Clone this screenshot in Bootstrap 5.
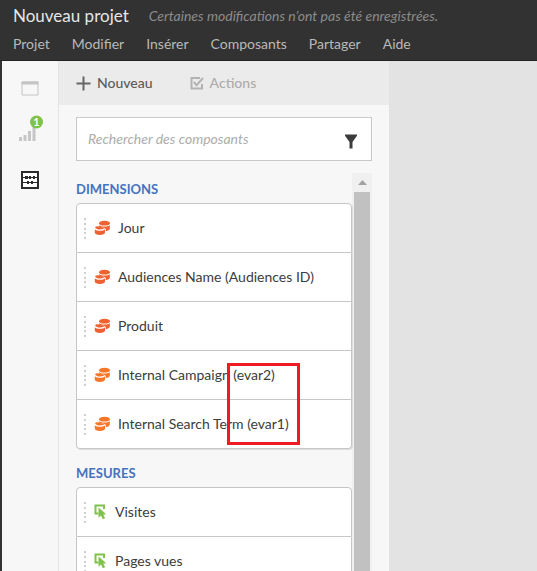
<!DOCTYPE html>
<html lang="fr">
<head>
<meta charset="utf-8">
<meta name="viewport" content="width=device-width, initial-scale=1">
<title>Nouveau projet</title>
<link href="https://cdn.jsdelivr.net/npm/bootstrap@5.3.0/dist/css/bootstrap.min.css" rel="stylesheet">
<style>
  body { font-family: Lato, "Open Sans", sans-serif; font-size: 14px; line-height: 20px; color: #3c3c3c; background: #e3e3e3; }
  svg { display: block; flex: none; }
  button { font-size: 14px; line-height: 20px; }
  .topbar { background: #323232; border-bottom: 1px solid #232323; height: 61px; padding: 6px 13px 0; }
  .topbar-row { gap: 20px; }
  .project-title { font-size: 17px; line-height: 20px; color: #e6e6e6; }
  .save-note { color: #8c8c8c; }
  .menu-list { gap: 22px; margin-top: 8px; }
  .menu-list a { color: #b9b9b9; }
  .workspace { border-left: 2px solid #323232; }
  .rail { width: 57px; background: #f7f7f7; border-right: 1px solid #e4e4e4; padding-top: 19px; gap: 17px; }
  .side-panel { width: 330px; background: #f7f7f7; }
  .toolbar { background: #ebebeb; height: 44px; padding: 0 17px; gap: 37px; }
  .toolbar button { gap: 6px; font-weight: 500; color: #5c5c5c; }
  .toolbar button:disabled { color: #acacac; }
  .search-box { margin: 12px 17px; height: 44px; border: 1px solid #c8c8c8; background: #fff; padding: 0 10px 0 11px; }
  .search-box input { outline: 0; font-style: italic; color: #444; }
  .search-box input::placeholder { color: #acacac; opacity: 1; }
  .component-area { margin: 0 17px; }
  .component-groups { padding-top: 6px; }
  .group-title { font-size: 13px; line-height: 20px; font-weight: 700; color: #4473c0; margin: 0 0 4px; }
  .component-list { --bs-list-group-border-color: #c6c6c6; --bs-list-group-border-radius: 4px; box-shadow: 1px 1px 0 #dedede; margin-bottom: 14px; }
  .component-list .list-group-item { height: 49px; padding: 0 7px; color: #3c3c3c; background: #fff; }
  .component-list .list-group-item:first-child { height: 50px; }
  .component-list .dimension-item { gap: 7px; }
  .component-list .metric-item { gap: 7px; }
  .grip { width: 3px; height: 22px; color: #cfcfcf; }
  .highlight-frame { left: 151px; bottom: 4px; width: 73px; height: 82px; border: 3px solid #ed1c24; z-index: 3; pointer-events: none; }
  .scroll-track { width: 20px; background: #f0f0f0; padding: 0 2px; }
  .scroll-up { height: 19px; }
  .scroll-thumb { background: #c1c1c1; }
</style>
<script src="https://cdn.jsdelivr.net/npm/bootstrap@5.3.0/dist/js/bootstrap.bundle.min.js"></script>
</head>
<body class="vh-100 d-flex flex-column overflow-hidden">
<svg width="0" height="0" class="position-absolute" aria-hidden="true">
  <symbol id="grip" viewBox="0 0 3 22"><path d="M0 1h2v2H0zM0 6h2v2H0zM0 11h2v2H0zM0 15h2v2H0zM0 20h2v2H0z" fill="currentColor"/></symbol>
  <symbol id="dimension" viewBox="0 0 17 16">
    <path d="M5 3.300C5 1.800 7.400.800 10.500.800S16 1.800 16 3.300 13.600 5.600 10.500 5.600 5 4.800 5 3.300z"/>
    <path d="M5.300 5c1 1.200 2.800 1.600 5.200 1.600S15 6 15.800 5v3.500c0 1.500-1.700 2.400-4 2.700V9.600C11.800 7.800 8.800 6.800 5.300 7z"/>
    <path d="M1 7.200c1-1 2.500-1 4-.6 2 .5 3.500.8 6 1.200-1 1.200-2.800 1.700-5 1.700S1.800 8.900 1 7.200z"/>
    <path d="M.8 9.200c1.200 1 2.900 1.500 5.200 1.500s3.900-.5 5-1.500v3.400c0 1.500-2.200 2.400-5.100 2.400S.8 14.100.8 12.600z"/>
  </symbol>
  <symbol id="metric" viewBox="0 0 14 16">
    <path d="M4.500 9.500H1.500v-8h8.500V5" fill="none" stroke="#7fc24c" stroke-width="2"/>
    <path d="M4.500 3.500v10.200l2.500-2.300 1.900 3.900 2.200-1-1.800-3.900 3-.2z" fill="#7fc24c"/>
  </symbol>
</svg>

<header class="topbar flex-shrink-0">
  <div class="topbar-row d-flex align-items-center">
    <h1 class="project-title fw-normal m-0">Nouveau projet</h1>
    <em class="save-note text-nowrap">Certaines modifications n’ont pas été enregistrées.</em>
  </div>
  <nav aria-label="Menu principal">
    <ul class="menu-list list-unstyled d-flex mb-0">
      <li><a href="#" class="text-decoration-none">Projet</a></li>
      <li><a href="#" class="text-decoration-none">Modifier</a></li>
      <li><a href="#" class="text-decoration-none">Insérer</a></li>
      <li><a href="#" class="text-decoration-none">Composants</a></li>
      <li><a href="#" class="text-decoration-none">Partager</a></li>
      <li><a href="#" class="text-decoration-none">Aide</a></li>
    </ul>
  </nav>
</header>

<main class="workspace d-flex flex-grow-1 overflow-hidden">
  <nav class="rail d-flex flex-column align-items-center flex-shrink-0" aria-label="Panneaux">
    <button type="button" class="border-0 bg-transparent p-0" aria-label="Panneaux">
      <svg width="18" height="17" viewBox="0 0 18 17"><path d="M1 2v13h16V2z" fill="none" stroke="#c4c4c4"/><path d="M.5 1.500h17v3H.5z" fill="#c4c4c4"/></svg>
    </button>
    <button type="button" class="border-0 bg-transparent p-0" aria-label="Visualisations, 1">
      <svg width="26" height="28" viewBox="0 0 26 28">
        <path d="M2 23h3v4H2zM6.500 21h3v6h-3zM11 17h3v10h-3zM15.500 13h3v14h-3z" fill="#c6c6c6"/>
        <circle cx="19.500" cy="8" r="6.500" fill="#7fc24c"/>
        <text x="19.500" y="12" text-anchor="middle" font-size="11" font-weight="700" fill="#fff">1</text>
      </svg>
    </button>
    <button type="button" class="border-0 bg-transparent p-0 pt-2 mt-1" aria-label="Composants">
      <svg width="18" height="18" viewBox="0 0 18 18"><path d="M1 1h16v16H1z" fill="#fff" stroke="#2b2b2b" stroke-width="2"/><path d="M2 6.500h14M2 11.500h14" stroke="#2b2b2b" stroke-width="1"/><path d="M4 5h3v3H4zM8 5h2v3H8zM12 5h2v3h-2zM6 10h2v3H6zM10 10h2v3h-2z" fill="#2b2b2b"/></svg>
    </button>
  </nav>

  <aside class="side-panel d-flex flex-column flex-shrink-0">
    <div class="toolbar d-flex flex-shrink-0">
      <button type="button" class="border-0 bg-transparent p-0 d-flex align-items-center">
        <svg width="15" height="15" viewBox="0 0 15 15"><path d="M7.500.5v14M.5 7.500h14" stroke="#666" stroke-width="2"/></svg>
        Nouveau
      </button>
      <button type="button" class="border-0 bg-transparent p-0 d-flex align-items-center" disabled>
        <svg width="14" height="14" viewBox="0 0 14 14" fill="none" stroke="#b3b3b3" stroke-width="2"><path d="M10 2H1.500v10.500h10.500V8"/><path d="M3.800 6l2.800 3.200L13 2"/></svg>
        Actions
      </button>
    </div>

    <div class="search-box d-flex align-items-center flex-shrink-0">
      <input type="text" class="border-0 bg-transparent p-0 flex-grow-1" placeholder="Rechercher des composants" aria-label="Rechercher des composants">
      <button type="button" class="border-0 bg-transparent p-0 pt-1 me-1" aria-label="Filtrer">
        <svg width="12" height="15" viewBox="0 0 12 15"><path d="M0 .5h12v1.200L7.500 8v6.500h-3V8L0 1.700z" fill="#3c3c3c"/></svg>
      </button>
    </div>

    <div class="component-area d-flex flex-grow-1 overflow-hidden">
      <div class="component-groups flex-grow-1">
        <h2 class="group-title">DIMENSIONS</h2>
        <div class="position-relative">
          <ul class="list-group component-list">
            <li class="list-group-item dimension-item d-flex align-items-center"><svg class="grip"><use href="#grip"/></svg><svg width="17" height="16" fill="#ed6132"><use href="#dimension"/></svg>Jour</li>
            <li class="list-group-item dimension-item d-flex align-items-center"><svg class="grip"><use href="#grip"/></svg><svg width="17" height="16" fill="#ed6132"><use href="#dimension"/></svg>Audiences Name (Audiences ID)</li>
            <li class="list-group-item dimension-item d-flex align-items-center"><svg class="grip"><use href="#grip"/></svg><svg width="17" height="16" fill="#ed6132"><use href="#dimension"/></svg>Produit</li>
            <li class="list-group-item dimension-item d-flex align-items-center"><svg class="grip"><use href="#grip"/></svg><svg width="17" height="16" fill="#f47629"><use href="#dimension"/></svg>Internal Campaign (evar2)</li>
            <li class="list-group-item dimension-item d-flex align-items-center"><svg class="grip"><use href="#grip"/></svg><svg width="17" height="16" fill="#f47629"><use href="#dimension"/></svg>Internal Search Term (evar1)</li>
          </ul>
          <div class="highlight-frame position-absolute" aria-hidden="true"></div>
        </div>
        <h2 class="group-title">MESURES</h2>
        <ul class="list-group component-list">
          <li class="list-group-item metric-item d-flex align-items-center"><svg class="grip"><use href="#grip"/></svg><svg width="14" height="16"><use href="#metric"/></svg>Visites</li>
          <li class="list-group-item metric-item d-flex align-items-center"><svg class="grip"><use href="#grip"/></svg><svg width="14" height="16"><use href="#metric"/></svg>Pages vues</li>
        </ul>
      </div>
      <div class="scroll-track d-flex flex-column flex-shrink-0" aria-hidden="true">
        <div class="scroll-up d-flex align-items-center justify-content-center"><svg width="9" height="5" viewBox="0 0 9 5"><path d="M4.500 0L9 5H0z" fill="#a3a3a3"/></svg></div>
        <div class="scroll-thumb flex-grow-1"></div>
      </div>
    </div>
  </aside>
</main>
</body>
</html>
